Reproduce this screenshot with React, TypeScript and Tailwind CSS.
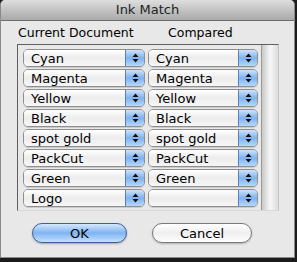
import React from 'react'

const left = ['Cyan', 'Magenta', 'Yellow', 'Black', 'spot gold', 'PackCut', 'Green', 'Logo']
const right = ['Cyan', 'Magenta', 'Yellow', 'Black', 'spot gold', 'PackCut', 'Green', '']

function Arrows() {
  return (
    <svg width="7" height="10" viewBox="0 0 7 10">
      <path d="M3.5 0.5 L6.5 4 L0.5 4 Z" fill="#111" />
      <path d="M3.5 9.5 L6.5 6 L0.5 6 Z" fill="#111" />
    </svg>
  )
}

function Popup({ label, width }: { label: string; width: string }) {
  return (
    <div
      className={`${width} h-[18px] flex rounded-[5px] border border-[#8e8e8e] overflow-hidden shadow-[0_1px_0_rgba(0,0,0,0.12)]`}
    >
      <div className="flex-1 bg-gradient-to-b from-[#ffffff] via-[#ececec] to-[#f7f7f7] pl-[7px] flex items-center text-[13px] leading-none text-black">
        {label}
      </div>
      <div className="w-[19px] border-l border-[#5b7fb5] bg-gradient-to-b from-[#cfe3fb] via-[#7fb2ee] to-[#b6d8fb] flex items-center justify-center">
        <Arrows />
      </div>
    </div>
  )
}

export default function App() {
  return (
    <div className="w-[297px] h-[262px] bg-[#1c1c1c] overflow-hidden font-['DejaVu_Sans',sans-serif]">
      <div className="w-[295px] h-[258px] bg-[#e8e8e8] border-x border-b border-[#8a8a8a] rounded-t-[5px] flex flex-col">
        <div className="h-[21px] shrink-0 bg-gradient-to-b from-[#dedede] to-[#a9a9a9] border-b border-[#6e6e6e] rounded-t-[5px] flex items-center justify-center text-[13px] text-[#222]">
          Ink Match
        </div>
        <div className="flex pl-[17px] pt-[4px] h-[20px] text-[12.5px] leading-[16px] text-black">
          <span className="w-[150px]">Current Document</span>
          <span>Compared</span>
        </div>
        <div className="ml-[16px] mt-[3px] w-[262px] h-[167px] flex border-t border-l border-[#5f5f5f] border-r border-r-[#c4c4c4] border-b border-b-[#d8d8d8]">
          <div className="flex-1 flex flex-col gap-[2px] pt-[4px] pl-[5px] bg-[#e8e8e8]">
            {left.map((l, i) => (
              <div key={i} className="flex gap-[3px]">
                <Popup label={l} width="w-[122px]" />
                <Popup label={right[i]} width="w-[110px]" />
              </div>
            ))}
          </div>
          <div className="w-[17px] border-l border-[#9a9a9a] bg-gradient-to-r from-[#c8c8c8] via-[#f8f8f8] to-[#dcdcdc]" />
        </div>
        <div className="flex pl-[31px] pt-[12px] gap-[25px]">
          <button className="w-[95px] h-[20px] rounded-full border border-[#3d5f9a] bg-gradient-to-b from-[#d6e8fd] via-[#7fb3f1] to-[#c5e2ff] text-[13px] leading-none text-black shadow-[0_1px_2px_rgba(0,0,0,0.3)]">
            OK
          </button>
          <button className="w-[100px] h-[20px] rounded-full border border-[#7a7a7a] bg-gradient-to-b from-[#ffffff] via-[#eeeeee] to-[#ffffff] text-[13px] leading-none text-black shadow-[0_1px_2px_rgba(0,0,0,0.25)]">
            Cancel
          </button>
        </div>
      </div>
    </div>
  )
}
